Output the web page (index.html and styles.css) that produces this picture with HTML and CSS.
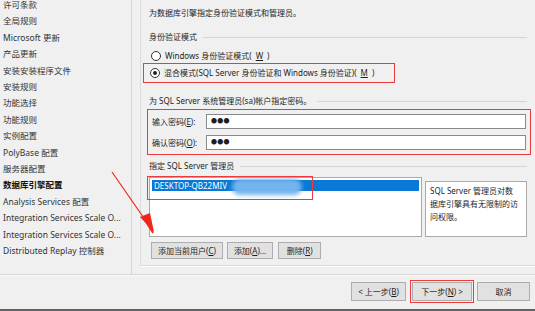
FILE: index.html
```html
<!DOCTYPE html>
<html lang="zh-CN">
<head>
    <meta charset="UTF-8">
    <title>SQL Server 安装 - 数据库引擎配置</title>
    <link rel="stylesheet" href="styles.css">
</head>
<body>

    <div class="wizard">
        <div class="main">
            <ul class="nav">
                <li>许可条款</li>
                <li>全局规则</li>
                <li>Microsoft 更新</li>
                <li>产品更新</li>
                <li>安装安装程序文件</li>
                <li>安装规则</li>
                <li>功能选择</li>
                <li>功能规则</li>
                <li>实例配置</li>
                <li>PolyBase 配置</li>
                <li>服务器配置</li>
                <li class="current">数据库引擎配置</li>
                <li>Analysis Services 配置</li>
                <li>Integration Services Scale O...</li>
                <li>Integration Services Scale O...</li>
                <li>Distributed Replay 控制器</li>
            </ul>

            <div class="panel">
                <p class="intro">为数据库引擎指定身份验证模式和管理员。</p>

                <div class="group-title">身份验证模式</div>
                <label class="radio"><span class="dot"></span>Windows 身份验证模式(<u>W</u>)</label>
                <div class="mark mark-radio">
                    <label class="radio"><span class="dot checked"></span>混合模式(SQL Server 身份验证和 Windows 身份验证)(<u>M</u>)</label>
                </div>

                <div class="group-title">为 SQL Server 系统管理员(sa)帐户指定密码。</div>
                <div class="mark mark-pass">
                    <div class="field">
                        <span class="field-label">输入密码(<u>E</u>):</span>
                        <span class="input">●●●</span>
                    </div>
                    <div class="field">
                        <span class="field-label">确认密码(<u>O</u>):</span>
                        <span class="input">●●●</span>
                    </div>
                </div>

                <div class="group-title">指定 SQL Server 管理员</div>
                <div class="admins">
                    <div class="listbox">
                        <div class="row selected">DESKTOP-QB22MIV<span class="blur"></span></div>
                        <div class="mark mark-list"></div>
                    </div>
                    <div class="desc">SQL Server 管理员对数据库引擎具有无限制的访问权限。</div>
                </div>

                <div class="actions">
                    <button class="btn">添加当前用户(<u>C</u>)</button>
                    <button class="btn">添加(<u>A</u>)...</button>
                    <button class="btn btn-del">删除(<u>R</u>)</button>
                </div>
            </div>
        </div>

        <div class="footer">
            <button class="btn btn-nav">&lt; 上一步(<u>B</u>)</button>
            <div class="mark mark-next">
                <button class="btn btn-nav">下一步(<u>N</u>) &gt;</button>
            </div>
            <button class="btn btn-nav">取消</button>
        </div>

        <svg class="arrow" width="60" height="80" viewBox="0 0 60 80">
            <path d="M2 2 L38 54" stroke="#f0261c" stroke-width="1.2" fill="none"/>
            <path d="M34 49 L43 63 L38 48 Z" fill="#f0261c" stroke="#f0261c" stroke-width="1.5"/>
            <path d="M44 62 L30 47 L40 43 Z" fill="#f0261c"/>
        </svg>
    </div>

</body>
</html>
```

FILE: styles.css
```css
* {
    margin: 0;
    padding: 0;
    box-sizing: border-box;
}

body {
    background: #f0f0f0;
    font-family: "Noto Sans", "Noto Sans CJK SC", sans-serif;
    font-size: 8px;
    color: #1e1e1e;
    width: 535px;
    height: 311px;
    overflow: hidden;
    border-bottom: 2px solid #5f6466;
    text-autospace: no-autospace;
    text-spacing-trim: space-all;
}

u {
    text-decoration: underline;
}

.wizard {
    position: relative;
    height: 309px;
}

.main {
    display: flex;
    height: 274px;
}

.nav {
    list-style: none;
    width: 133px;
    padding: 0 0 0 3px;
    margin-top: -3px;
    border-right: 1px solid #d4d4d4;
    color: #333;
    font-size: 8.5px;
}

.nav li {
    line-height: 16.4px;
    white-space: nowrap;
}

.nav li.current {
    font-weight: bold;
    color: #111;
}

.panel {
    flex: 1;
    margin-left: 8px;
    height: 266px;
    padding: 7px 8px 0 8px;
    border-left: 1px solid #dcdcdc;
    border-bottom: 1px solid #dcdcdc;
    box-shadow: 1px 1px 0 #fff;
}

.intro {
    line-height: 12px;
}

.group-title {
    display: flex;
    align-items: center;
    gap: 6px;
    line-height: 12px;
    margin-top: 12px;
}

.group-title::after {
    content: "";
    flex: 1;
    height: 1px;
    background: #d5d5d5;
}

.radio {
    display: flex;
    align-items: center;
    gap: 4px;
    line-height: 12px;
    margin-top: 7px;
    padding-left: 2px;
}

.dot {
    width: 10px;
    height: 10px;
    border: 1px solid #333;
    border-radius: 50%;
    background: #fff;
    display: flex;
    align-items: center;
    justify-content: center;
}

.dot.checked::after {
    content: "";
    width: 4px;
    height: 4px;
    border-radius: 50%;
    background: #222;
}

.mark {
    border: 1.5px solid #ee3a3a;
}

.mark-radio {
    width: 252px;
    margin: 1px 0 0 -6px;
    padding: 3px 0 3px 4px;
}

.mark-radio .radio {
    margin-top: 0;
}

.mark-pass {
    margin: 2px -4px 0 -2px;
    padding: 4px 4px 4px 4px;
}

.field {
    display: flex;
    align-items: center;
    margin-top: 6px;
}

.field:first-child {
    margin-top: 0;
}

.field-label {
    width: 54px;
}

.input {
    flex: 1;
    height: 15px;
    background: #fff;
    border: 1px solid #8a8a8a;
    padding-left: 4px;
    font-size: 6px;
    line-height: 13px;
    letter-spacing: 0.3px;
}

.mark-pass + .group-title {
    margin-top: 5px;
}

.admins {
    display: flex;
    align-items: flex-end;
    gap: 3px;
    margin-top: 5px;
}

.listbox {
    position: relative;
    width: 273px;
    height: 60px;
    background: #fff;
    border: 1px solid #a9a9a9;
    padding: 2px 2px;
}

.row {
    height: 11px;
    line-height: 11px;
    padding-left: 2px;
}

.row.selected {
    background: #0a78d6;
    color: #fff;
    position: relative;
}

.blur {
    position: absolute;
    left: 80px;
    top: -1px;
    width: 70px;
    height: 16px;
    border-radius: 8px;
    background: #74b4ec;
    filter: blur(2px);
}

.mark-list {
    position: absolute;
    left: -3px;
    top: -2px;
    width: 166px;
    height: 24px;
}

.desc {
    width: 102px;
    height: 56px;
    background: #fff;
    border: 1px solid #a9a9a9;
    padding: 2px 8px 2px 4px;
    line-height: 13px;
}

.actions {
    display: flex;
    gap: 4px;
    margin-top: 5px;
    padding-left: 2px;
}

.btn {
    font-family: inherit;
    font-size: 8px;
    color: #1e1e1e;
    height: 17px;
    padding: 0 6px;
    background: #e1e1e1;
    border: 1px solid #adadad;
}

.btn-del {
    width: 43px;
    margin-left: 1px;
}

.footer {
    display: flex;
    justify-content: flex-end;
    align-items: center;
    gap: 2px;
    height: 35px;
    padding: 0 5px 2px 0;
    border-top: 1px solid #d7d7d7;
    box-shadow: inset 0 1px 0 #fafafa;
}

.btn-nav {
    height: 19px;
    width: 55px;
}

.mark-next {
    margin-left: 2px;
    padding: 1px;
}

.mark-next .btn-nav {
    width: 60px;
}

.footer > .btn-nav:last-child {
    width: 53px;
    margin-left: 1px;
}

.arrow {
    position: absolute;
    left: 110px;
    top: 170px;
}
```
